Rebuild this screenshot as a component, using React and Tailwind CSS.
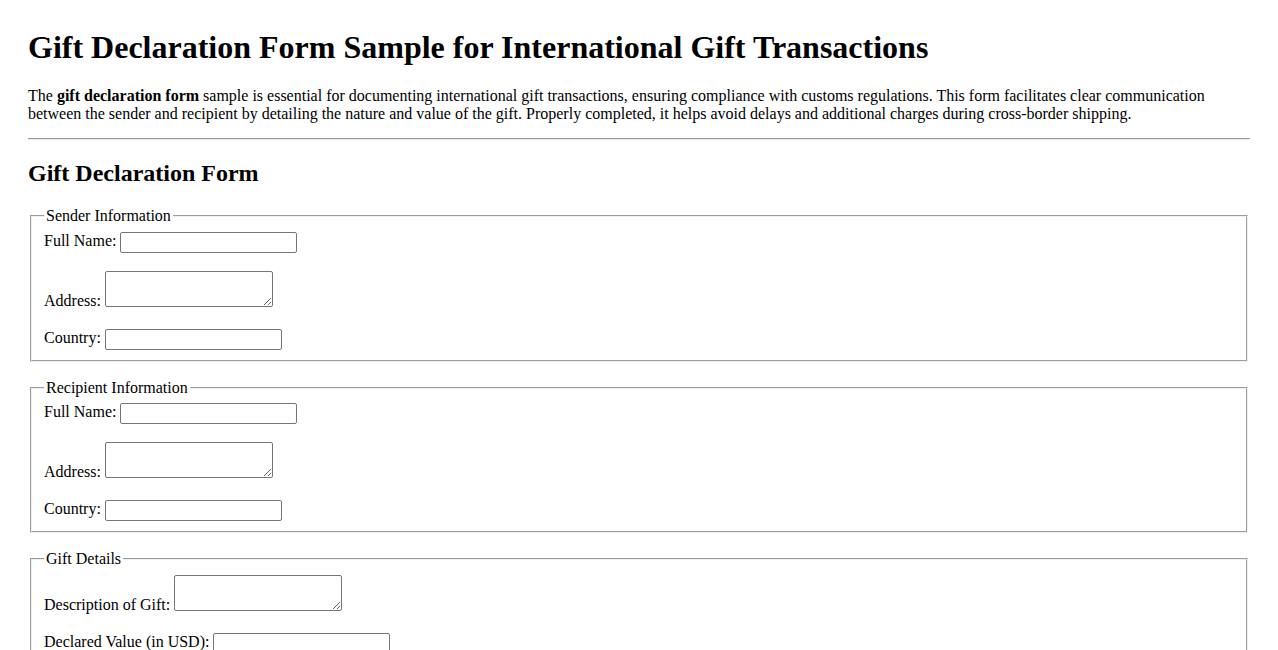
import React from 'react';

const inputCls = 'h-[21px] w-[177px] border border-[#767676] rounded-[2px] bg-white px-[2px] text-[13.33px]';
const areaCls = 'h-[36px] w-[168px] border border-[#767676] rounded-[2px] bg-white px-[2px] text-[13.33px]';

function InputRow({ label, className = '' }) {
  return (
    <div className={`flex items-start gap-1 ${className}`}>
      <label className="leading-[18px]">{label}</label>
      <input type="text" className={inputCls} />
    </div>
  );
}

function AreaRow({ label, className = '' }) {
  return (
    <div className={`flex items-end gap-1 ${className}`}>
      <label className="leading-[18px] -mb-[3px]">{label}</label>
      <textarea className={areaCls} />
    </div>
  );
}

function Section({ legend, className = '', children }) {
  return (
    <fieldset className={`mx-[2px] border-2 [border-style:groove] border-[#f0f0f0] px-3 pb-[10px] ${className}`}>
      <legend className="px-[2px] leading-[18px]">{legend}</legend>
      {children}
    </fieldset>
  );
}

export default function App() {
  return (
    <div className="min-h-screen bg-white px-7 pt-[29px] text-base text-black font-['Liberation_Serif','Times_New_Roman',serif]">
      {/* ── Heading + intro ── */}
      <h1 className="text-[32px] leading-[37px] font-bold">Gift Declaration Form Sample for International Gift Transactions</h1>
      <p className="mt-[21px] leading-[18px]">
        The <strong className="font-bold">gift declaration form</strong> sample is essential for documenting international gift
        transactions, ensuring compliance with customs regulations. This form facilitates clear communication between the sender
        and recipient by detailing the nature and value of the gift. Properly completed, it helps avoid delays and additional
        charges during cross-border shipping.
      </p>
      <hr className="mt-[15px] h-0 border-0 border-t border-b border-t-[#9a9a9a] border-b-[#eeeeee]" />

      {/* ── Form ── */}
      <h2 className="mt-[19px] text-[24px] leading-[28px] font-bold">Gift Declaration Form</h2>
      <form>
        <Section legend="Sender Information" className="mt-[20px] pt-[7px]">
          <InputRow label="Full Name:" />
          <AreaRow label="Address:" className="mt-[18px]" />
          <InputRow label="Country:" className="mt-[22px]" />
        </Section>

        <Section legend="Recipient Information" className="mt-[17px] pt-[6px]">
          <InputRow label="Full Name:" />
          <AreaRow label="Address:" className="mt-[18px]" />
          <InputRow label="Country:" className="mt-[22px]" />
        </Section>

        <Section legend="Gift Details" className="mt-[17px] pt-[7px]">
          <AreaRow label="Description of Gift:" />
          <InputRow label="Declared Value (in USD):" className="mt-[22px]" />
        </Section>
      </form>
    </div>
  );
}
